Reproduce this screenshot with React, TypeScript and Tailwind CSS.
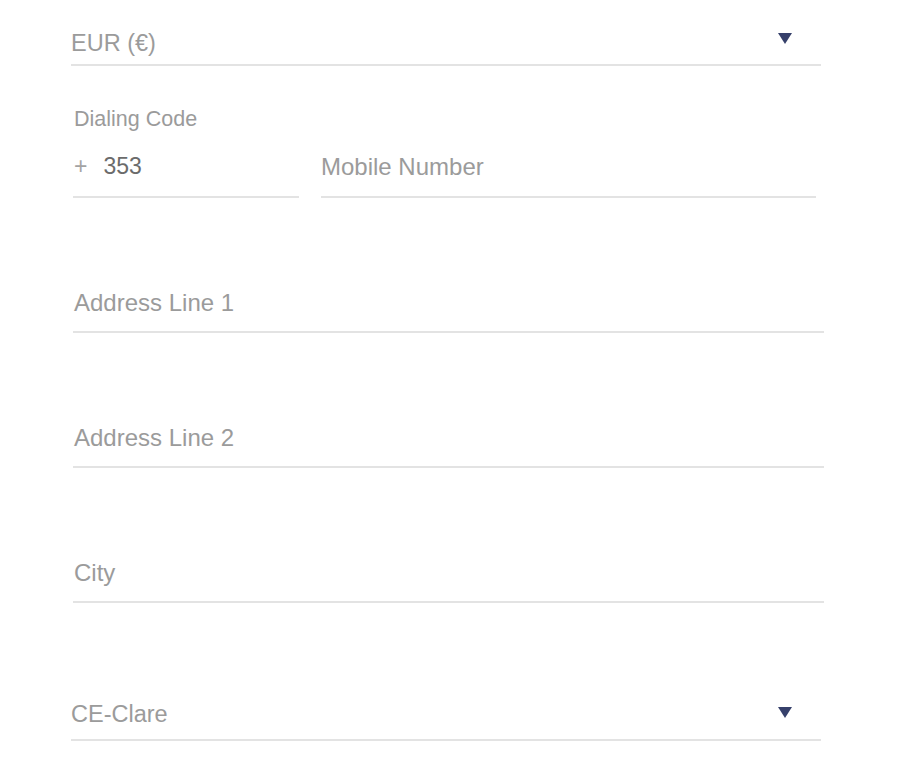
function Caret({ className }: { className?: string }) {
  return (
    <svg width="14" height="11" viewBox="0 0 14 11" className={className}>
      <path d="M0 0 H14 L7 11 Z" fill="#36406b" />
    </svg>
  );
}

function TextField({ placeholder }: { placeholder: string }) {
  return (
    <div className="ml-[73px] mt-[91px] w-[751px] border-b-2 border-[#e3e3e3] pb-[15px] pl-[1px] text-[24px] leading-[27px] text-[#9b9b9b]">
      {placeholder}
    </div>
  );
}

export default function App() {
  return (
    <div className="flex h-[761px] w-[897px] flex-col bg-white font-['Liberation_Sans',Arial,sans-serif]">
      <div className="mt-[30px] ml-[71px] flex w-[750px] items-start justify-between border-b-2 border-[#e3e3e3] pb-[8px]">
        <div className="text-[23.5px] leading-[26px] text-[#9b9b9b]">EUR (€)</div>
        <Caret className="mr-[29px] mt-[3px]" />
      </div>

      <div className="ml-[74px] mt-[41px] text-[21.5px] leading-[24px] text-[#9b9b9b]">Dialing Code</div>

      <div className="mt-[22px] flex gap-[22px] pl-[73px]">
        <div className="flex w-[226px] items-center border-b-2 border-[#e3e3e3] pb-[16px] pl-[1px] text-[23px] leading-[27px]">
          <div className="text-[#a3a3a3]">+</div>
          <div className="ml-[16px] text-[#6b6b6b]">353</div>
        </div>
        <div className="w-[495px] border-b-2 border-[#e3e3e3] pb-[16px] text-[24px] leading-[27px] text-[#9b9b9b]">
          Mobile Number
        </div>
      </div>

      <TextField placeholder="Address Line 1" />
      <TextField placeholder="Address Line 2" />
      <TextField placeholder="City" />

      <div className="mt-[98px] ml-[71px] flex w-[750px] items-start justify-between border-b-2 border-[#e3e3e3] pb-[12px]">
        <div className="text-[23.5px] leading-[26px] text-[#9b9b9b]">CE-Clare</div>
        <Caret className="mr-[29px] mt-[6px]" />
      </div>
    </div>
  );
}
